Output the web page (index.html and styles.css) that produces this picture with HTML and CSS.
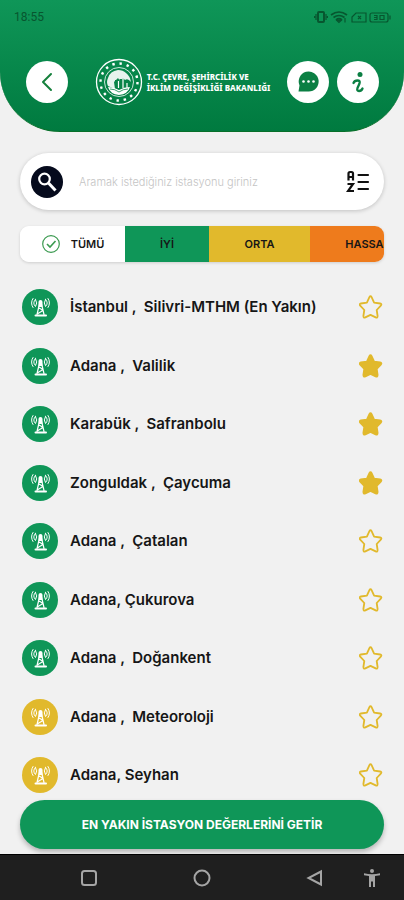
FILE: index.html
```html
<!DOCTYPE html>
<html lang="tr">
<head>
    <title>İstasyonlar</title>
    <meta charset="utf-8">
    <meta name="viewport" content="width=device-width, initial-scale=1.0">
    <link rel="stylesheet" href="styles.css">
</head>
<body>
    <!-- shared icons -->
    <svg class="sprite" aria-hidden="true">
        <symbol id="tower" viewBox="0 0 36 36">
            <g fill="none" stroke="#fff" stroke-linecap="round" stroke-linejoin="round">
                <path d="M17.500 15 15 25.500M19.500 15l2.500 10.500M16.500 18.500l4.500 3-5 3" stroke-width="1.200"/>
                <path d="M13.500 26.500h10.500" stroke-width="2"/>
                <path d="M13.500 10.500q2.500 3.500 0 7-3.500-3.500 0-7zM23.500 10.500q-2.500 3.500 0 7 3.500-3.500 0-7zM11 9.500q-3 4.500 0 9M26 9.500q3 4.500 0 9" stroke-width="1"/>
            </g>
            <path d="M16.500 13a2 2 0 1 1 4 0v5h-4z" fill="#fff"/>
        </symbol>
        <symbol id="star" viewBox="0 0 24 24">
            <path d="M10.400 2.200q1.100-2 2.200 0l2.500 5.400 6 .9q2.100.5.700 2.200l-4.100 4.300.9 6q0 2.200-1.900 1.400l-5.200-2.500-5.200 2.500q-1.900.8-1.900-1.400l.9-6L1.200 10.700q-1.400-1.700.7-2.200l6-.9z" stroke="#e1b92c" stroke-width="1.800" stroke-linejoin="round"/>
        </symbol>
    </svg>

    <header class="header">
        <div class="status-bar">
            <span>18:55</span>
            <svg width="78" height="14" viewBox="0 0 78 14" fill="none" stroke="#07562f" stroke-width="1.2">
                <rect x="4" y="2" width="6" height="10" rx="1" stroke-width="2"/>
                <path d="M2 4v6M12 4v6M0.600 6v2M13.400 6v2"/>
                <path d="M17 5q8-6 16 0M19.500 7.500q5.500-4 11 0M22 10q3-2.500 6 0" stroke-width="1.700"/>
                <path d="M25 12.500l-2-2h4zM31 8v4.500"/>
                <path d="M42 3h10v9H38V7zM44 6l3 3M47 6l-3 3"/>
                <rect x="56" y="3" width="18" height="9" rx="2"/>
                <path d="M76 5.500v4M60 5.500h3v4h-3M60 7.500h3M66 5.500h4v4h-4z"/>
            </svg>
        </div>
        <div class="topbar">
            <button class="round-btn back-btn" aria-label="Geri">
                <svg width="42" height="42" viewBox="0 0 42 42"><path d="M25 13l-8 8 8 8" fill="none" stroke="#15803c" stroke-width="2" stroke-linecap="round" stroke-linejoin="round"/></svg>
            </button>
            <div class="brand">
                <svg width="48" height="48" viewBox="0 0 48 48">
                    <circle cx="24" cy="24" r="22.500" fill="none" stroke="#fff" stroke-width="1.300"/>
                    <circle cx="24" cy="24" r="18.500" fill="none" stroke="#fff" stroke-width="2.400" stroke-dasharray="2.400 4.860"/>
                    <circle cx="24" cy="24" r="14.500" fill="none" stroke="#fff" stroke-width=".8"/>
                    <path d="M13 20q2-7 10-8 5 0 8 3 4 3 5 9-3-4-6-2l-2-2-3 3-2-3-4 4 1 7-7-3q-2-4 0-8z" fill="#fff" opacity=".9"/>
                    <path d="M20 22h3v8h-3zM24.500 21h3v9h-3zM29 24h2v6h-2z" fill="#098447"/>
                    <path d="M23.500 23v7M28 20v10M32 25v5" stroke="#fff" stroke-width="1.200"/>
                    <path d="M13 29q6 0 11 3 5-3 11-3-2 7-11 8-9-1-11-8z" fill="#fff"/>
                    <path d="M15 31q5 0 9 3 4-3 9-3" fill="none" stroke="#098447" stroke-width=".8"/>
                </svg>
                <div class="brand-name">T.C. ÇEVRE, ŞEHİRCİLİK VE<br>İKLİM DEĞİŞİKLİĞİ BAKANLIĞI</div>
            </div>
            <div class="actions">
                <button class="round-btn" aria-label="Mesajlar">
                    <svg width="42" height="42" viewBox="0 0 42 42">
                        <path d="M11.500 30.500l1-6a10 10 0 1 1 9 6z" fill="#0b7f43"/>
                        <g fill="#fff"><circle cx="16.500" cy="20.500" r="1.300"/><circle cx="21.500" cy="20.500" r="1.300"/><circle cx="26.500" cy="20.500" r="1.300"/></g>
                    </svg>
                </button>
                <button class="round-btn" aria-label="Bilgi">
                    <svg width="42" height="42" viewBox="0 0 42 42">
                        <circle cx="23" cy="13.500" r="2.500" fill="#0b7f43"/>
                        <path d="M16.500 22q1-2.500 4-2.500 3 0 2 3l-2 4.500q-1 3 1.500 3 2.500 0 3.500-2.500" fill="none" stroke="#0b7f43" stroke-width="2.300" stroke-linecap="round"/>
                    </svg>
                </button>
            </div>
        </div>
    </header>

    <main class="content">
        <div class="search">
            <button class="search-btn" aria-label="Ara">
                <svg width="32" height="32" viewBox="0 0 32 32"><circle cx="16" cy="16" r="16" fill="#050a1c"/><circle cx="13.500" cy="13" r="5.300" fill="none" stroke="#fff" stroke-width="2.200"/><path d="M17.500 17l7 7.500" stroke="#fff" stroke-width="3"/></svg>
            </button>
            <input type="text" aria-label="İstasyon ara" placeholder="Aramak istediğiniz istasyonu giriniz">
            <button class="sort-btn" aria-label="A-Z sırala">
                <svg width="24" height="24" viewBox="0 0 24 24" fill="none" stroke="#111" stroke-width="2.200">
                    <path d="M2.500 10.500V3.500q0-1.500 1.500-1.500h1.500q1.500 0 1.500 1.500v7M2.500 7H7M1.500 14H7l-5 7h6"/>
                    <path d="M12.500 5H22M12.500 12H22M12.500 19H22" stroke-linecap="round"/>
                </svg>
            </button>
        </div>

        <div class="tabs">
            <button class="tab tab-all">
                <svg width="20" height="20" viewBox="0 0 20 20" fill="none" stroke="#3b9a50" stroke-width="1.200"><circle cx="10" cy="10" r="8.300"/><path d="M6 10l3 3 5.500-6" stroke-width="1.600"/></svg>
                TÜMÜ
            </button>
            <button class="tab tab-good">İYİ</button>
            <button class="tab tab-mid">ORTA</button>
            <button class="tab tab-sensitive">HASSAS</button>
        </div>

        <ul class="stations">
            <li>
                <span class="badge"><svg><use href="#tower"/></svg></span>
                <span class="name">İstanbul ,  Silivri-MTHM (En Yakın)</span>
                <button class="fav" aria-label="Favori"><svg><use href="#star"/></svg></button>
            </li>
            <li>
                <span class="badge"><svg><use href="#tower"/></svg></span>
                <span class="name">Adana ,  Valilik</span>
                <button class="fav active" aria-label="Favori"><svg><use href="#star"/></svg></button>
            </li>
            <li>
                <span class="badge"><svg><use href="#tower"/></svg></span>
                <span class="name">Karabük ,  Safranbolu</span>
                <button class="fav active" aria-label="Favori"><svg><use href="#star"/></svg></button>
            </li>
            <li>
                <span class="badge"><svg><use href="#tower"/></svg></span>
                <span class="name">Zonguldak ,  Çaycuma</span>
                <button class="fav active" aria-label="Favori"><svg><use href="#star"/></svg></button>
            </li>
            <li>
                <span class="badge"><svg><use href="#tower"/></svg></span>
                <span class="name">Adana ,  Çatalan</span>
                <button class="fav" aria-label="Favori"><svg><use href="#star"/></svg></button>
            </li>
            <li>
                <span class="badge"><svg><use href="#tower"/></svg></span>
                <span class="name">Adana, Çukurova</span>
                <button class="fav" aria-label="Favori"><svg><use href="#star"/></svg></button>
            </li>
            <li>
                <span class="badge"><svg><use href="#tower"/></svg></span>
                <span class="name">Adana ,  Doğankent</span>
                <button class="fav" aria-label="Favori"><svg><use href="#star"/></svg></button>
            </li>
            <li>
                <span class="badge mid"><svg><use href="#tower"/></svg></span>
                <span class="name">Adana ,  Meteoroloji</span>
                <button class="fav" aria-label="Favori"><svg><use href="#star"/></svg></button>
            </li>
            <li>
                <span class="badge mid"><svg><use href="#tower"/></svg></span>
                <span class="name">Adana, Seyhan</span>
                <button class="fav" aria-label="Favori"><svg><use href="#star"/></svg></button>
            </li>
        </ul>

        <button class="nearest-btn">EN YAKIN İSTASYON DEĞERLERİNİ GETİR</button>
    </main>

    <nav class="navbar">
        <button aria-label="Son uygulamalar"><svg width="20" height="20" viewBox="0 0 20 20"><rect x="3" y="3" width="14" height="14" rx="2.500"/></svg></button>
        <button aria-label="Ana ekran"><svg width="20" height="20" viewBox="0 0 20 20"><circle cx="10" cy="10" r="7.500"/></svg></button>
        <button aria-label="Geri"><svg width="20" height="20" viewBox="0 0 20 20"><path d="M16 3.500v13L3.500 10z"/></svg></button>
        <button class="access" aria-label="Erişilebilirlik"><svg width="20" height="20" viewBox="0 0 20 20"><circle cx="10" cy="3" r="2"/><path d="M2 5.200q8 2 16 0v2l-5 .8v11h-2v-5.500H9V19H7V8l-5-.8z"/></svg></button>
    </nav>
</body>
</html>
```

FILE: styles.css
```css
* {
    box-sizing: border-box;
}
body {
    margin: 0;
    min-height: 100vh;
    display: flex;
    flex-direction: column;
    background: #f1f1f1;
    color: #161616;
    font-family: Inter, "Liberation Sans", sans-serif;
}
button {
    border: none;
    padding: 0;
    background: none;
    color: inherit;
    font-family: inherit;
    cursor: pointer;
}
svg {
    display: block;
}
.sprite {
    position: absolute;
    width: 0;
    height: 0;
}

/* header */
.header {
    padding: 9px 12px 28px 14px;
    background: linear-gradient(#0f9658, #007a3f);
    border-bottom: 1px solid #08702a;
    border-radius: 0 0 60px 60px;
}
.status-bar {
    display: flex;
    justify-content: space-between;
    align-items: center;
    height: 16px;
    color: #07562f;
    font: 12px/16px Roboto, sans-serif;
}
.topbar {
    display: flex;
    align-items: center;
    justify-content: space-between;
    margin-top: 36px;
    padding: 0 13px 0 12px;
}
.round-btn {
    width: 42px;
    height: 42px;
    border-radius: 50%;
    background: #fff;
}
.brand {
    display: flex;
    align-items: center;
    gap: 4px;
    margin: -3px 0;
    padding-left: 10px;
}
.brand-name {
    color: #fff;
    font: 800 8px/11px "Noto Sans", sans-serif;
    white-space: nowrap;
}
.actions {
    display: flex;
    gap: 8px;
}

/* content */
.content {
    flex: 1;
    display: flex;
    flex-direction: column;
    padding: 21px 20px 5px;
}
.search {
    display: flex;
    align-items: center;
    height: 57px;
    padding: 0 14px 0 11px;
    border-radius: 29px;
    background: #fff;
    box-shadow: 0 1px 4px rgba(0,0,0,0.2);
}
.search input {
    flex: 1;
    min-width: 0;
    margin-left: 16px;
    padding: 0;
    border: none;
    outline: none;
    background: none;
    font: 300 11px/16px Inter, sans-serif;
}
.search input::placeholder {
    color: #c4c4c4;
}
.tabs {
    display: flex;
    height: 36px;
    margin-top: 16px;
    border-radius: 9px;
    overflow: hidden;
    box-shadow: 0 1px 3px rgba(0,0,0,0.15);
}
.tab {
    flex: none;
    font-size: 11px;
    font-weight: 600;
}
.tab-all {
    display: flex;
    align-items: center;
    justify-content: center;
    gap: 10px;
    width: 105px;
    background: #fff;
}
.tab-good {
    width: 84px;
    background: #0f9658;
}
.tab-mid {
    width: 101px;
    background: #e1b92c;
}
.tab-sensitive {
    width: 116px;
    background: #ee7b1c;
}

/* station list */
.stations {
    flex: 1;
    display: flex;
    flex-direction: column;
    justify-content: space-between;
    margin: 27px 0 7px;
    padding: 0 1px 0 2px;
    list-style: none;
}
.stations li {
    display: flex;
    align-items: center;
}
.badge {
    width: 36px;
    height: 36px;
    border-radius: 50%;
    background: #0f9658;
}
.badge.mid {
    background: #e1b92c;
}
.badge svg {
    width: 36px;
    height: 36px;
}
.name {
    flex: 1;
    margin-left: 12px;
    font-size: 15px;
    font-weight: 600;
    line-height: 20px;
    white-space: pre-wrap;
}
.fav {
    fill: none;
}
.fav.active {
    fill: #e1b92c;
}
.fav svg {
    width: 24px;
    height: 24px;
}
.nearest-btn {
    height: 49px;
    border-radius: 25px;
    background: #0f9658;
    color: #fff;
    font-size: 12px;
    font-weight: 700;
    box-shadow: 0 3px 5px rgba(0,0,0,0.25);
}

/* system navigation */
.navbar {
    position: relative;
    display: flex;
    justify-content: space-around;
    align-items: center;
    height: 46px;
    padding: 0 32px;
    border-top: 1px solid #000;
    background: #1f1f1f;
}
.navbar svg {
    fill: none;
    stroke: #a5a5a5;
    stroke-width: 2;
}
.navbar .access {
    position: absolute;
    right: 22px;
}
.navbar .access svg {
    fill: #a5a5a5;
    stroke: none;
}
```
